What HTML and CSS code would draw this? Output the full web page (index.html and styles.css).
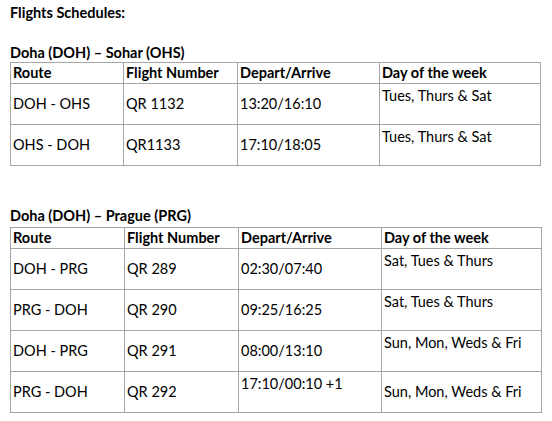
FILE: index.html
```html
<!DOCTYPE html>
<html lang="en">
<head>
<meta charset="utf-8">
<title>Flights Schedules</title>
<link rel="stylesheet" href="styles.css">
</head>
<body>
<div class="page">
  <p class="title">Flights Schedules:</p>

  <h2 class="route-title first">Doha (DOH) – Sohar (OHS)</h2>
  <table class="sched t1">
    <colgroup>
      <col class="c1"><col class="c2"><col class="c3"><col class="c4">
    </colgroup>
    <thead>
      <tr><th>Route</th><th>Flight Number</th><th>Depart/Arrive</th><th>Day of the week</th></tr>
    </thead>
    <tbody>
      <tr><td>DOH - OHS</td><td>QR 1132</td><td>13:20/16:10</td><td class="top">Tues, Thurs &amp; Sat</td></tr>
      <tr><td>OHS - DOH</td><td>QR1133</td><td>17:10/18:05</td><td class="top">Tues, Thurs &amp; Sat</td></tr>
    </tbody>
  </table>

  <h2 class="route-title second">Doha (DOH) – Prague (PRG)</h2>
  <table class="sched t2">
    <colgroup>
      <col class="c1"><col class="c2"><col class="c3"><col class="c4">
    </colgroup>
    <thead>
      <tr><th>Route</th><th>Flight Number</th><th>Depart/Arrive</th><th>Day of the week</th></tr>
    </thead>
    <tbody>
      <tr><td>DOH - PRG</td><td>QR 289</td><td>02:30/07:40</td><td class="top">Sat, Tues &amp; Thurs</td></tr>
      <tr><td>PRG - DOH</td><td>QR 290</td><td>09:25/16:25</td><td class="top">Sat, Tues &amp; Thurs</td></tr>
      <tr><td>DOH - PRG</td><td>QR 291</td><td>08:00/13:10</td><td class="top">Sun, Mon, Weds &amp; Fri</td></tr>
      <tr><td>PRG - DOH</td><td>QR 292</td><td class="top">17:10/00:10 +1</td><td>Sun, Mon, Weds &amp; Fri</td></tr>
    </tbody>
  </table>
</div>
</body>
</html>
```

FILE: styles.css
```css
html, body {
  margin: 0;
  padding: 0;
  background: #ffffff;
}

body {
  font-family: Lato, "Open Sans", sans-serif;
  font-size: 14.5px;
  color: #000000;
}

.page {
  padding: 4px 0 0 10px;
}

.title {
  margin: 0;
  font-weight: bold;
  line-height: 18px;
}

.route-title {
  margin: 0;
  font-size: 14.5px;
  font-weight: bold;
  line-height: 18px;
}

.route-title.first {
  margin-top: 22px;
}

.route-title.second {
  margin-top: 41px;
}

.sched {
  border-collapse: collapse;
  table-layout: fixed;
}

.t1 { width: 530px; margin-top: 0; }
.t2 { width: 531px; margin-top: 2px; }

.t1 .c1 { width: 113px; }
.t1 .c2 { width: 114px; }
.t1 .c3 { width: 142px; }
.t1 .c4 { width: 161px; }

.t2 .c1 { width: 114px; }
.t2 .c2 { width: 114px; }
.t2 .c3 { width: 143px; }
.t2 .c4 { width: 160px; }

.sched th,
.sched td {
  border: 1px solid #a6a6a6;
  padding: 0 2px;
  text-align: left;
  line-height: 18px;
  white-space: nowrap;
}

.sched th {
  height: 20px;
  font-weight: bold;
  vertical-align: middle;
}

.sched td {
  height: 40px;
  vertical-align: middle;
  font-weight: normal;
}

.sched td.top {
  vertical-align: top;
  height: 37px;
  padding-top: 3px;
}
```
